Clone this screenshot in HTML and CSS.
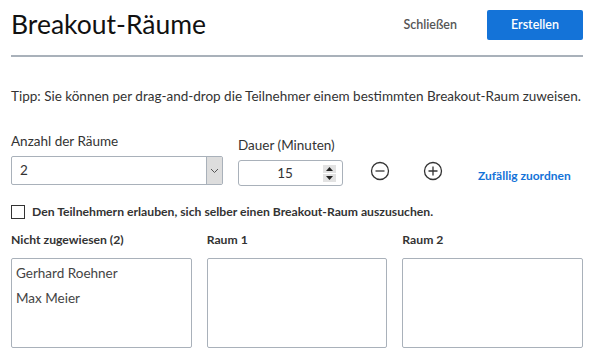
FILE: index.html
```html
<!DOCTYPE html>
<html lang="de">
<head>
    <meta charset="UTF-8">
    <title>Breakout-Räume</title>
    <link rel="stylesheet" href="styles.css">
</head>
<body>
    <div class="dialog">
        <div class="header">
            <h1>Breakout-Räume</h1>
            <button class="btn-link">Schließen</button>
            <button class="btn-primary">Erstellen</button>
        </div>

        <p class="tip">Tipp: Sie können per drag-and-drop die Teilnehmer einem bestimmten Breakout-Raum zuweisen.</p>

        <div class="settings">
            <div class="field">
                <label>Anzahl der Räume</label>
                <div class="select">
                    <span class="select-value">2</span>
                    <span class="select-arrow">
                        <svg width="9" height="6" viewBox="0 0 9 6"><path d="M1 1l3.5 3.5L8 1" fill="none" stroke="#555" stroke-width="1"/></svg>
                    </span>
                </div>
            </div>
            <div class="field">
                <label>Dauer (Minuten)</label>
                <div class="number">
                    <span class="number-value">15</span>
                    <span class="spinner">
                        <span class="spin"><svg width="7" height="4" viewBox="0 0 7 4"><path d="M0 4L3.5 0L7 4z" fill="#222"/></svg></span>
                        <span class="spin"><svg width="7" height="4" viewBox="0 0 7 4"><path d="M0 0L3.5 4L7 0z" fill="#222"/></svg></span>
                    </span>
                </div>
            </div>
            <button class="icon-btn">
                <svg width="20" height="20" viewBox="0 0 20 20"><circle cx="10" cy="10" r="8.5" fill="none" stroke="#333" stroke-width="1.3"/><path d="M5.5 10h9" stroke="#333" stroke-width="1.3"/></svg>
            </button>
            <button class="icon-btn">
                <svg width="20" height="20" viewBox="0 0 20 20"><circle cx="10" cy="10" r="8.5" fill="none" stroke="#333" stroke-width="1.3"/><path d="M5.5 10h9M10 5.5v9" stroke="#333" stroke-width="1.3"/></svg>
            </button>
            <a class="random" href="#">Zufällig zuordnen</a>
        </div>

        <label class="check">
            <span class="box"></span>
            Den Teilnehmern erlauben, sich selber einen Breakout-Raum auszusuchen.
        </label>

        <div class="rooms">
            <div class="room">
                <h3>Nicht zugewiesen (2)</h3>
                <div class="room-list">
                    <div class="person">Gerhard Roehner</div>
                    <div class="person">Max Meier</div>
                </div>
            </div>
            <div class="room">
                <h3>Raum 1</h3>
                <div class="room-list"></div>
            </div>
            <div class="room">
                <h3>Raum 2</h3>
                <div class="room-list"></div>
            </div>
        </div>
    </div>
</body>
</html>
```

FILE: styles.css
```css
body {
    margin: 0;
    font-family: Lato, "Open Sans", sans-serif;
    color: #333;
    background: #fff;
}
.dialog {
    width: 572px;
    padding: 0 0 0 11px;
}
.header {
    display: flex;
    align-items: center;
    height: 55px;
    border-bottom: 2px solid #a9b1ba;
}
h1 {
    flex: 1;
    margin: 0;
    font-size: 26.5px;
    font-weight: 400;
    color: #111;
    padding-bottom: 7px;
}
.btn-link {
    border: 0;
    background: none;
    font-family: inherit;
    font-size: 12.5px;
    font-weight: 600;
    color: #555;
    margin-right: 30px;
    padding: 0;
    margin-bottom: 6px;
}
.btn-primary {
    width: 96px;
    height: 30px;
    border: 0;
    border-radius: 2px;
    background: #1473d8;
    color: #fff;
    font-family: inherit;
    font-size: 12.5px;
    font-weight: 600;
    margin-bottom: 6px;
}
.tip {
    margin: 30px 0 0;
    font-size: 13.5px;
    line-height: 18px;
}
.settings {
    display: flex;
    align-items: flex-end;
    margin-top: 27px;
}
.field label {
    display: block;
    font-size: 13.5px;
    line-height: 18px;
    margin-bottom: 6px;
}
.select {
    display: flex;
    width: 210px;
    height: 27px;
    border: 1px solid #a9b1ba;
    border-radius: 2px;
    margin-right: 15px;
}
.select-value {
    flex: 1;
    padding-left: 8px;
    font-size: 13.5px;
    line-height: 27px;
}
.select-arrow {
    display: flex;
    align-items: center;
    justify-content: center;
    width: 15px;
    background: #ddd;
    border-left: 1px solid #a9b1ba;
}
.number {
    display: flex;
    align-items: center;
    width: 103px;
    height: 24px;
    border: 1px solid #a9b1ba;
    border-radius: 3px;
    margin-bottom: -1px;
}
.number-value {
    flex: 1;
    text-align: center;
    font-size: 13.5px;
    padding-left: 8px;
}
.spinner {
    display: flex;
    flex-direction: column;
    gap: 1px;
    width: 13px;
    margin-right: 6px;
}
.spin {
    display: flex;
    align-items: center;
    justify-content: center;
    height: 8px;
    background: #e2e2e2;
}
.icon-btn {
    border: 0;
    background: none;
    padding: 0;
    width: 20px;
    height: 20px;
    margin: 0 0 4px 27px;
    display: flex;
}
.icon-btn + .icon-btn {
    margin-left: 33px;
}
.random {
    margin: 0 0 2px 35px;
    font-size: 12px;
    font-weight: 700;
    color: #1473d8;
    text-decoration: none;
}
.check {
    display: flex;
    align-items: center;
    gap: 7px;
    margin-top: 19px;
    font-size: 12.2px;
    font-weight: 700;
    color: #333;
}
.box {
    width: 12px;
    height: 12px;
    border: 1px solid #333;
}
.rooms {
    display: flex;
    gap: 15px;
    margin-top: 13px;
}
.room {
    width: 181px;
}
.room h3 {
    margin: 0 0 10px;
    font-size: 12.2px;
    font-weight: 700;
    color: #333;
    line-height: 16px;
}
.room-list {
    border: 1px solid #a9b1ba;
    border-radius: 2px;
    padding: 2px 0 0 4px;
    box-sizing: border-box;
    height: 90px;
}
.person {
    font-size: 13.5px;
    line-height: 25px;
    color: #444;
}
```
